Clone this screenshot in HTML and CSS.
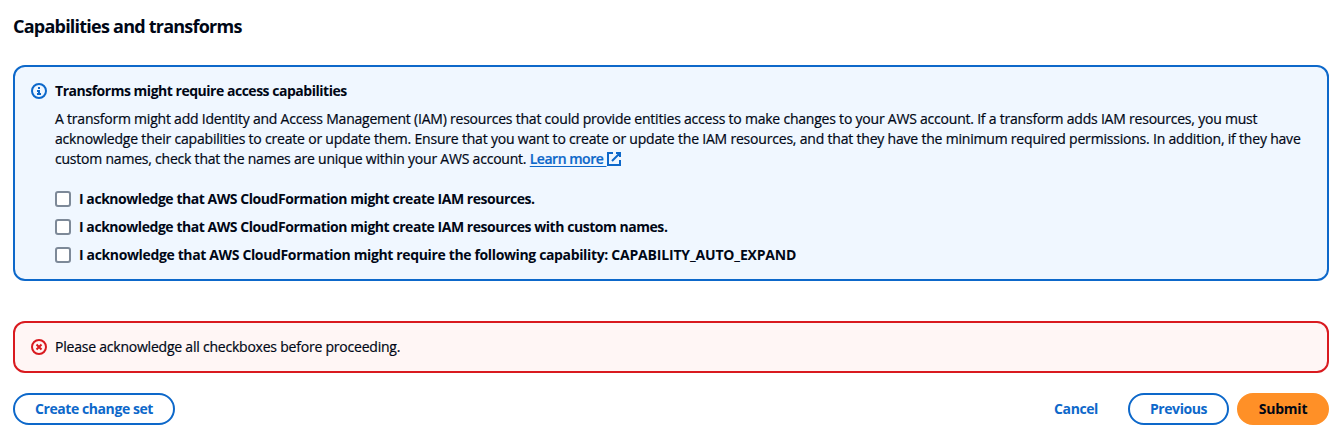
FILE: index.html
```html
<!DOCTYPE html>
<html lang="en">
<head>
<meta charset="utf-8">
<title>Capabilities and transforms</title>
<link rel="stylesheet" href="styles.css">
</head>
<body>
<main class="page">
  <h2 class="title">Capabilities and transforms</h2>
  <section class="alert alert-info">
    <svg class="status" viewBox="0 0 16 16"><circle cx="8" cy="8" r="7"/><path d="M8 11V8H6M10 11H6M8 4v2"/></svg>
    <div class="alert-body">
      <h3 class="alert-title">Transforms might require access capabilities</h3>
      <p class="copy">A transform might add Identity and Access Management (IAM) resources that could provide entities access to make changes to your AWS account. If a transform adds IAM resources, you must<br>
      <span class="line-wide">acknowledge their capabilities to create or update them. Ensure that you want to create or update the IAM resources, and that they have the minimum required permissions. In addition, if they have</span><br>
      custom names, check that the names are unique within your AWS account. <a class="link" href="#"><span class="link-text">Learn more&nbsp;</span><svg class="external" viewBox="0 0 16 16"><path d="M10 2h4v4M6 10l8-8M14 9v5H2V2h5"/></svg></a></p>
      <div class="checks">
        <label class="check"><input type="checkbox"><span>I acknowledge that AWS CloudFormation might create IAM resources.</span></label>
        <label class="check"><input type="checkbox"><span>I acknowledge that AWS CloudFormation might create IAM resources with custom names.</span></label>
        <label class="check"><input type="checkbox"><span class="check-wide">I acknowledge that AWS CloudFormation might require the following capability: <span class="capability">CAPABILITY_AUTO_EXPAND</span></span></label>
      </div>
    </div>
  </section>
  <section class="alert alert-error">
    <svg class="status" viewBox="0 0 16 16"><circle cx="8" cy="8" r="7"/><path d="m5.5 5.5 5 5m0-5-5 5"/></svg>
    <div class="alert-body">Please acknowledge all checkboxes before proceeding.</div>
  </section>
  <footer class="actions">
    <button class="btn create">Create change set</button>
    <div class="right">
      <button class="btn cancel">Cancel</button>
      <button class="btn previous">Previous</button>
      <button class="btn submit">Submit</button>
    </div>
  </footer>
</main>
</body>
</html>
```
FILE: styles.css
```css
* { box-sizing: border-box; }
body { margin: 0; background: #fff; color: #000716; font: 14px/20px "Open Sans", "Noto Sans", sans-serif; }
.page { padding: 15px 14px 0 13px; }
.title { margin: 0 0 28px; font-size: 18px; line-height: 22px; height: 22px; font-weight: 700; letter-spacing: -0.77px; }
.alert { display: flex; gap: 8px; border: 2px solid #0d68ca; border-radius: 12px; padding: 14px 16px; }
.alert-info { height: 216px; background: #f0f7ff; }
.alert-error { height: 52px; margin-top: 40px; border-color: #d91a1f; background: #fff6f5; letter-spacing: -0.22px; -webkit-text-stroke: 0.2px; }
.status { width: 16px; height: 16px; flex: none; margin-top: 2px; fill: none; stroke: #0d68ca; stroke-width: 2; }
.alert-error .status { stroke: #d91a1f; }
.alert-title { margin: 0 0 8px; font-size: 14px; line-height: 20px; font-weight: 700; letter-spacing: -0.48px; }
.copy { margin: 0; white-space: nowrap; letter-spacing: -0.217px; -webkit-text-stroke: 0.2px; }
.line-wide { letter-spacing: -0.2px; }
.link { color: #0d68ca; text-decoration: none; }
.link-text { text-decoration: underline 1px; text-decoration-skip-ink: none; text-underline-offset: 2px; font-weight: 600; letter-spacing: -0.48px; }
.external { width: 16px; height: 16px; vertical-align: -3px; fill: none; stroke: currentColor; stroke-width: 2; }
.checks { margin-top: 20px; display: grid; gap: 8px; font-weight: 700; letter-spacing: -0.45px; }
.check-wide { letter-spacing: -0.36px; }
.capability { letter-spacing: -0.17px; }
.check { display: flex; gap: 8px; align-items: center; }
.check input { appearance: none; width: 16px; height: 16px; margin: 0; border: 2px solid #7d8998; border-radius: 3px; background: #fff; }
.actions { display: flex; justify-content: space-between; margin-top: 20px; }
.right { display: flex; gap: 8px; }
.btn { height: 32px; border: 2px solid #0d68ca; border-radius: 20px; background: #fff; color: #0d68ca; font: 700 14px/20px "Open Sans", sans-serif; letter-spacing: -0.42px; padding: 0; }
.create { width: 162px; }
.cancel { width: 88px; border-color: transparent; }
.previous { width: 101px; }
.submit { width: 92px; background: #ff9027; border-color: #ff9027; color: #000716; letter-spacing: -0.2px; }
```
